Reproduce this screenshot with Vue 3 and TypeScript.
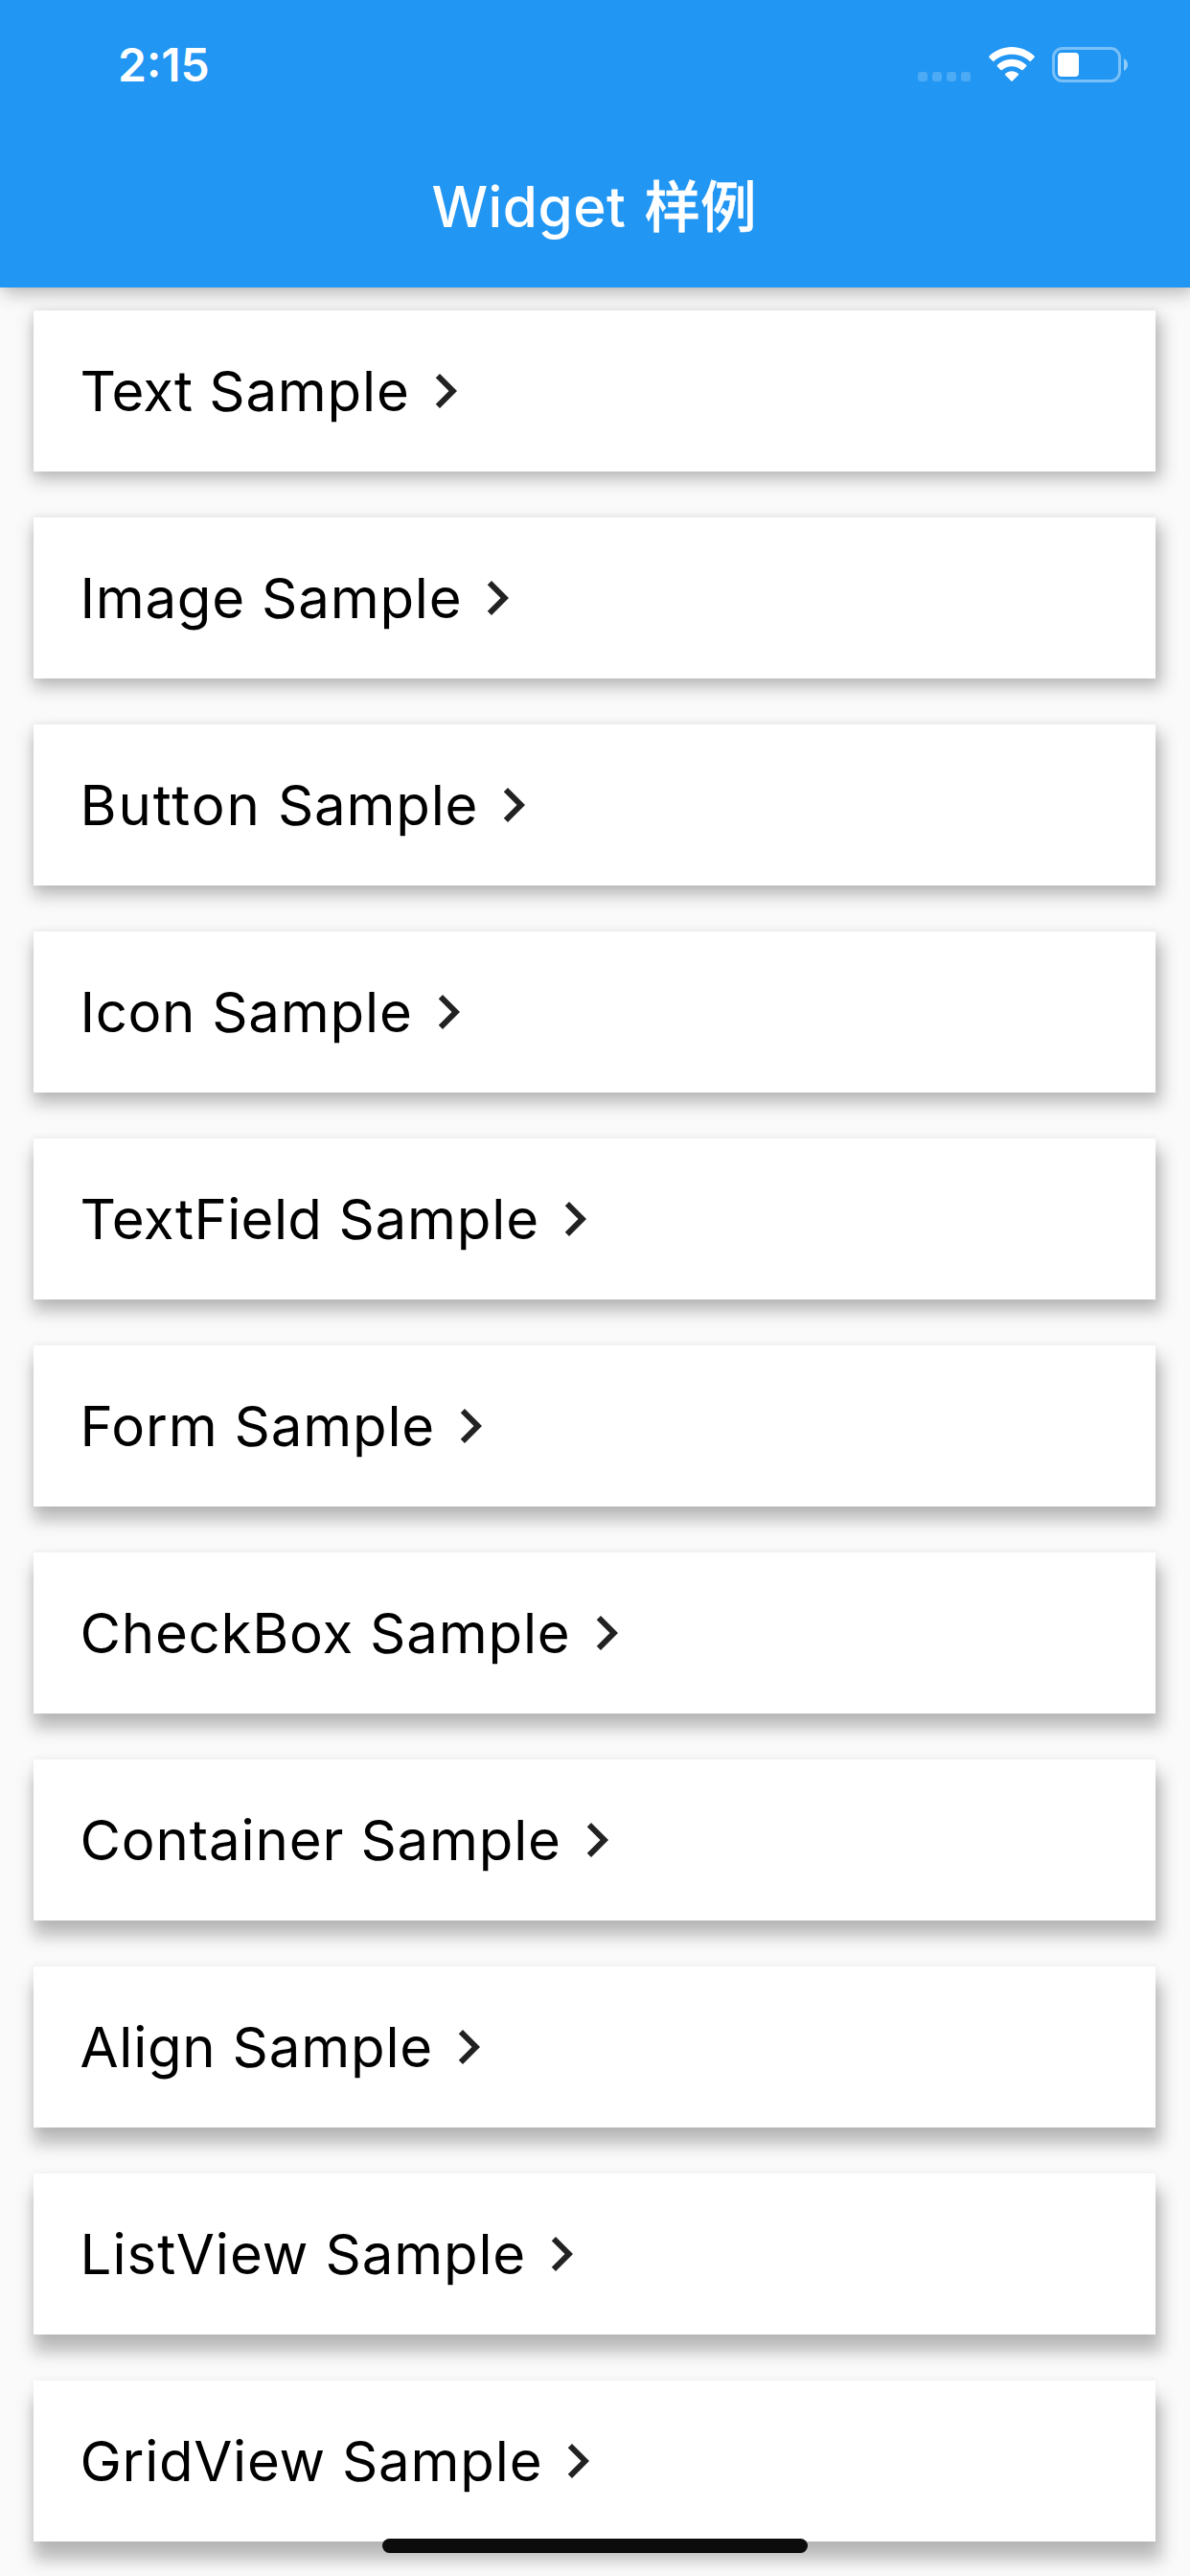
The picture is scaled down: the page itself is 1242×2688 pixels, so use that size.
<script setup lang="ts">
interface Sample {
  name: string
  tracking: number
}

const samples: Sample[] = [
  { name: 'Text', tracking: 0 },
  { name: 'Image', tracking: 0.7 },
  { name: 'Button', tracking: 1.9 },
  { name: 'Icon', tracking: 0.6 },
  { name: 'TextField', tracking: 0.35 },
  { name: 'Form', tracking: 0.8 },
  { name: 'CheckBox', tracking: 0.75 },
  { name: 'Container', tracking: 0.85 },
  { name: 'Align', tracking: 0.7 },
  { name: 'ListView', tracking: 1.0 },
  { name: 'GridView', tracking: 0.7 },
]

const shadowShift = (index: number): string => `${(7 + index * 1.16).toFixed(2)}px`
</script>

<template>
  <div class="screen">
    <header class="top">
      <div class="status">
        <span class="time">2:15</span>
        <div class="indicators">
          <svg class="signal" width="55" height="10" viewBox="0 0 55 10">
            <rect v-for="n in 4" :key="n" :x="(n - 1) * 15" y="0" width="10" height="10" rx="3" />
          </svg>
          <svg class="wifi" width="48" height="36" viewBox="0 0 48 36" fill="#fff">
            <path d="M24 0C33 0 41.400 3.600 47.500 9.400Q48.200 10.100 47.500 10.900L43.900 14.700Q43.200 15.400 42.400 14.700C37.600 10.300 31.100 7.800 24 7.800S10.400 10.300 5.600 14.700Q4.800 15.400 4.100 14.700L.5 10.900Q-.2 10.100 .5 9.400C6.600 3.600 15 0 24 0Z" />
            <path d="M24 12.800C29.800 12.800 35.100 15 39.100 18.700Q39.900 19.400 39.200 20.200L35.600 23.900Q34.900 24.600 34.100 23.900C31.400 21.600 27.900 20.200 24 20.200S16.600 21.600 13.900 23.900Q13.100 24.600 12.400 23.900L8.800 20.200Q8.100 19.400 8.900 18.700C12.900 15 18.200 12.800 24 12.800Z" />
            <path d="M24 25.300C26.600 25.300 28.900 26.200 30.700 27.700Q31.500 28.400 30.800 29.200L24.700 35.400Q24 36.100 23.300 35.400L17.200 29.200Q16.500 28.400 17.300 27.700C19.100 26.200 21.400 25.300 24 25.300Z" />
          </svg>
          <svg class="battery" width="80" height="37" viewBox="0 0 80 37">
            <rect x="1.500" y="1.500" width="69" height="34" rx="9.500" fill="none" stroke="#fff" stroke-opacity=".4" stroke-width="3" />
            <rect x="6" y="6" width="22" height="25" rx="4" fill="#fff" />
            <path d="M75 12C77.500 13.200 79 15.700 79 18.500S77.500 23.800 75 25Z" fill="#fff" fill-opacity=".5" />
          </svg>
        </div>
      </div>
      <h1 class="title">Widget <span class="han">样例</span></h1>
    </header>

    <main class="list">
      <div
        v-for="(sample, index) in samples"
        :key="sample.name"
        class="card"
        :style="{ '--shift': shadowShift(index) }"
      >
        <div class="face">
          <span class="label"><span :style="{ letterSpacing: `${sample.tracking}px` }">{{ sample.name }}</span> Sample</span>
          <svg class="chevron" width="72" height="72" viewBox="0 0 24 24">
            <path d="M10 6L8.590 7.410 13.170 12l-4.580 4.590L10 18l6-6z" fill="#222" />
          </svg>
        </div>
      </div>
    </main>

    <div class="home-bar"></div>
  </div>
</template>

<style>
body {
  background: #fafafa;
}
</style>

<style scoped>
.screen {
  position: relative;
  width: 1242px;
  height: 2688px;
  overflow: hidden;
  background: #fafafa;
  font-family: Inter, "Noto Sans CJK SC", sans-serif;
}

.top {
  position: relative;
  z-index: 2;
  height: 300px;
  background: #2196f3;
  color: #fff;
  box-shadow: 3px 7px 17px rgba(0, 0, 0, 0.24), 0 0 5px 2px rgba(0, 0, 0, 0.04);
}

.status {
  display: flex;
  justify-content: space-between;
  height: 132px;
  padding: 0 64px 0 123px;
  box-sizing: border-box;
}

.time {
  margin-top: 38px;
  font-size: 48px;
  line-height: 60px;
  font-weight: 600;
}

.indicators {
  display: flex;
  align-items: flex-start;
  margin-top: 49px;
}

.signal {
  margin-top: 26px;
  fill: rgba(255, 255, 255, 0.2);
}

.wifi {
  margin-left: 19px;
}

.battery {
  margin-left: 18px;
}

.title {
  margin: 0;
  height: 168px;
  padding-right: 2px;
  line-height: 168px;
  font-size: 58.500px;
  font-weight: 540;
  letter-spacing: 0.5px;
  word-spacing: 3px;
  text-align: center;
  white-space: pre;
}

.han {
  font-weight: 500;
  letter-spacing: 0;
  -webkit-text-stroke: 0.4px #fff;
}

.list {
  display: flex;
  flex-direction: column;
  gap: 48px;
  padding: 24px 36px 0 35px;
}

.card {
  position: relative;
  z-index: 0;
  height: 168px;
}

.card::before {
  content: "";
  position: absolute;
  z-index: -1;
  top: var(--shift);
  right: -6px;
  bottom: calc(-0.8px - var(--shift));
  left: 0;
  background: rgba(0, 0, 0, 0.26);
  filter: blur(8.500px);
}

.face {
  display: flex;
  align-items: center;
  height: 100%;
  padding: 0 48px 0 48.500px;
  box-sizing: border-box;
  background: #fff;
  box-shadow: 0 0 6px 2px rgba(0, 0, 0, 0.04);
}

.label {
  font-size: 58.200px;
  line-height: 72px;
  letter-spacing: 0.8px;
  color: #000;
  white-space: pre;
}

.chevron {
  flex: none;
  margin-left: 1px;
}

.home-bar {
  position: absolute;
  z-index: 3;
  left: 399px;
  bottom: 24px;
  width: 444px;
  height: 15px;
  border-radius: 7.500px;
  background: #0c0c0c;
}
</style>
